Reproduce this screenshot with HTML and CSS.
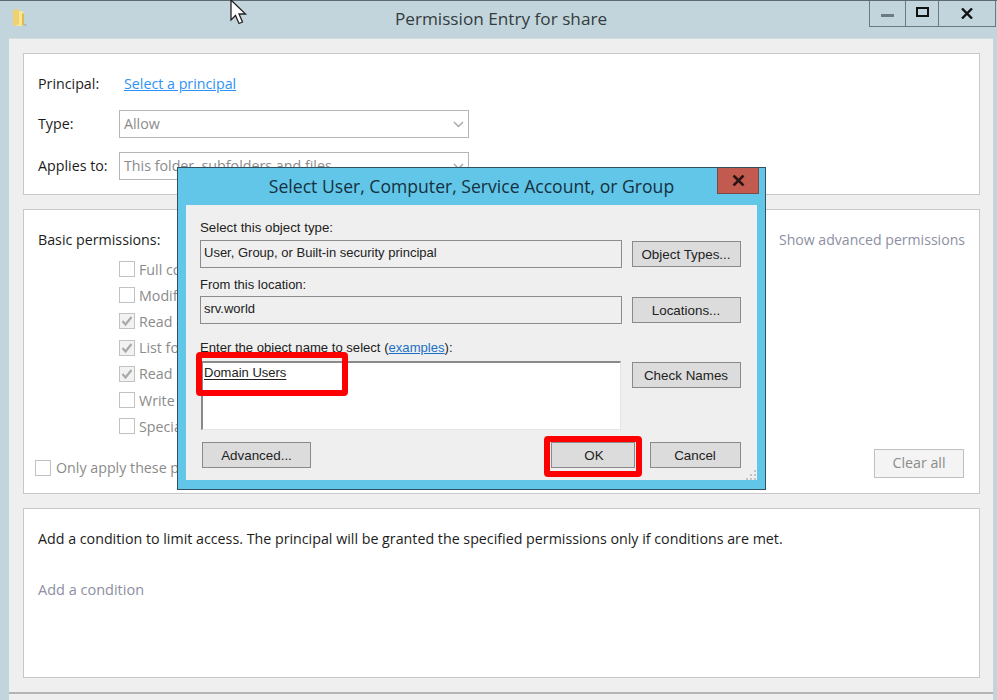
FILE: index.html
```html
<!DOCTYPE html>
<html lang="en">
<head>
<meta charset="utf-8">
<title>Permission Entry for share</title>
<link rel="stylesheet" href="styles.css">
</head>
<body>
<div class="window">
  <header class="titlebar">
    <svg class="folder" width="16" height="20" viewBox="0 0 16 20"><path d="M1 2l5-1 1 1v15l-5 1-1-1z" fill="#eed272"/><path d="M7 3h3l2 2v11l-2 2H3l4-2z" fill="#f8e596"/><path d="M10 5l2 1v11l-2 1z" fill="#dcbc4e"/><path d="M12 16l3 1-2 1z" fill="#8fa2a9"/></svg>
    <h1 class="wintitle">Permission Entry for share</h1>
    <div class="controls">
      <span class="ctl ctl-min"><i class="min-bar"></i></span>
      <span class="ctl ctl-max"><i class="max-box"></i></span>
      <span class="ctl ctl-close"><svg width="12" height="11" viewBox="0 0 12 11"><path d="M1 .5l10 10M11 .5l-10 10" stroke="#111" stroke-width="2.400" fill="none"/></svg></span>
    </div>
  </header>
  <main class="panel">
    <section class="card card-top">
      <div class="row row-principal"><span class="lbl">Principal:</span><a class="link">Select a principal</a></div>
      <div class="row row-type"><span class="lbl">Type:</span><div class="select">Allow<svg class="chev" width="11" height="7" viewBox="0 0 11 7"><path d="M1 1l4.500 4.500L10 1" stroke="#a8a8a8" stroke-width="1.500" fill="none"/></svg></div></div>
      <div class="row row-applies"><span class="lbl">Applies to:</span><div class="select">This folder, subfolders and files<svg class="chev" width="11" height="7" viewBox="0 0 11 7"><path d="M1 1l4.500 4.500L10 1" stroke="#a8a8a8" stroke-width="1.500" fill="none"/></svg></div></div>
    </section>
    <section class="card card-perm">
      <div class="perm-head"><span class="lbl">Basic permissions:</span><span class="muted-link adv">Show advanced permissions</span></div>
      <ul class="checks">
        <li><i class="cb"></i>Full control</li>
        <li><i class="cb"></i>Modify</li>
        <li><i class="cb on"><svg width="14" height="14" viewBox="0 0 14 14"><path d="M2.500 7l3 3.500 6-7.500" stroke="#a9a9a9" stroke-width="2.200" fill="none"/></svg></i>Read &amp; execute</li>
        <li><i class="cb on"><svg width="14" height="14" viewBox="0 0 14 14"><path d="M2.500 7l3 3.500 6-7.500" stroke="#a9a9a9" stroke-width="2.200" fill="none"/></svg></i>List folder contents</li>
        <li><i class="cb on"><svg width="14" height="14" viewBox="0 0 14 14"><path d="M2.500 7l3 3.500 6-7.500" stroke="#a9a9a9" stroke-width="2.200" fill="none"/></svg></i>Read</li>
        <li><i class="cb"></i>Write</li>
        <li><i class="cb"></i>Special permissions</li>
      </ul>
      <div class="perm-foot">
        <span class="only"><i class="cb"></i>Only apply these permissions to objects and/or containers within this container</span>
        <span class="clear">Clear all</span>
      </div>
    </section>
    <section class="card card-cond">
      <p class="cond-text">Add a condition to limit access. The principal will be granted the specified permissions only if conditions are met.</p>
      <span class="muted-link">Add a condition</span>
    </section>
    <footer class="footer"></footer>
  </main>
</div>

<svg class="cursor" width="18" height="27" viewBox="0 0 18 27"><path d="M1 0v20l4.500-4.500 3.500 8 3.500-1.500-3.500-8h6.500z" fill="#fff" stroke="#222" stroke-width="1.300"/></svg>

<div class="dialog">
  <div class="dlg-title">Select User, Computer, Service Account, or Group</div>
  <span class="dlg-close"><svg width="13" height="11" viewBox="0 0 13 11"><path d="M1.500 .5l10 10M11.500 .5l-10 10" stroke="#2a1512" stroke-width="2.600" fill="none"/></svg></span>
  <div class="dlg-body">
    <div class="dlg-label l1">Select this object type:</div>
    <div class="dlg-row">
      <div class="dlg-field">User, Group, or Built-in security principal</div>
      <span class="btn">Object Types...</span>
    </div>
    <div class="dlg-label l2">From this location:</div>
    <div class="dlg-row">
      <div class="dlg-field">srv.world</div>
      <span class="btn">Locations...</span>
    </div>
    <div class="dlg-label l3">Enter the object name to select (<a class="dlg-link">examples</a>):</div>
    <div class="dlg-row dlg-row-name">
      <div class="dlg-area"><u>Domain Users</u></div>
      <span class="btn">Check Names</span>
    </div>
    <div class="dlg-actions">
      <span class="btn">Advanced...</span>
      <span class="spacer"></span>
      <span class="btn btn-ok">OK</span>
      <span class="btn btn-cancel">Cancel</span>
    </div>
    <svg class="grip" width="12" height="11" viewBox="0 0 12 11"><path d="M9 1h2v2H9zM5 5h2v2H5zM9 5h2v2H9zM1 9h2v2H1zM5 9h2v2H5zM9 9h2v2H9z" fill="#c4c4c4"/></svg>
  </div>
</div>
<div class="mark mark-name"></div>
<div class="mark mark-ok"></div>
</body>
</html>
```
FILE: styles.css
```css
* { box-sizing: border-box; }
html, body { margin: 0; height: 700px; overflow: hidden; }
body { position: relative; width: 997px; font-family: "Open Sans", "Noto Sans", sans-serif; font-size: 14.250px; color: #1c1c1c; background: #c3d5dc; }

.window { display: flex; flex-direction: column; height: 700px; border-top: 1.500px solid #5d6a70; }
.titlebar { position: relative; flex: 0 0 36.500px; display: flex; align-items: flex-start; justify-content: center; }
.folder { position: absolute; left: 12px; top: 7px; }
.wintitle { margin: 7px 0 0 5px; font-size: 17.200px; font-weight: 400; line-height: 22px; color: #333c40; }
.controls { position: absolute; top: 0; right: 1px; display: flex; height: 25.500px; border: 1px solid #6b7a82; border-top: 0; }
.ctl { display: flex; align-items: center; justify-content: center; }
.ctl-min { width: 36px; border-right: 1px solid #6b7a82; }
.ctl-max { width: 33px; border-right: 1px solid #6b7a82; }
.ctl-close { width: 56px; }
.min-bar { display: block; width: 13px; height: 3px; margin-top: 4px; background: #6d7b83; }
.max-box { display: block; width: 13px; height: 10px; border: 2.500px solid #111; margin-bottom: 2px; }

.panel { flex: 1; margin: 0 4px 0 9px; padding: 14px 13px 0 14px; background: #efefef; display: flex; flex-direction: column; border-top: 1px solid #d3dde1; }
.card { background: #fff; border: 1.500px solid #c8c8c8; }
.card-top { height: 142px; padding: 0 14px; }
.card-perm { height: 285px; margin-top: 14px; padding: 0 14px; display: flex; flex-direction: column; }
.card-cond { height: 170px; margin-top: 14px; padding: 0 14px; }

.row { display: flex; align-items: center; }
.lbl { display: block; width: 81px; flex: none; white-space: nowrap; }
.row-principal { height: 20px; margin-top: 20px; }
.link { margin-left: 5px; color: #2e93f4; text-decoration: underline; }
.row-type { margin-top: 16px; }
.row-applies { margin-top: 14px; }
.select { position: relative; width: 350px; height: 28px; line-height: 26px; padding-left: 4px; border: 1.500px solid #b5b5b5; color: #8b8b8b; background: #fff; }
.chev { position: absolute; right: 4px; top: 10px; }

.perm-head { display: flex; justify-content: space-between; margin-top: 20px; line-height: 20px; }
.muted-link { color: #8d8fa2; }
.adv { font-size: 14.100px; }
.checks { list-style: none; margin: 6.500px 0 0 81px; padding: 0; color: #8b8b8b; }
.checks li { display: flex; align-items: center; height: 26.200px; white-space: nowrap; }
.cb { display: flex; align-items: center; justify-content: center; flex: none; width: 16px; height: 16px; margin-right: 4px; border: 1.500px solid #c2c2c2; background: #fff; }
.cb.on { background: #f2f2f2; }
.perm-foot { position: relative; display: flex; margin-top: 9.500px; height: 30px; align-items: center; }
.only { display: flex; align-items: center; margin: 8px 0 0 -3px; color: #8b8b8b; white-space: nowrap; }
.only .cb { margin-right: 5px; }
.clear { position: absolute; right: 1px; top: 0; width: 90px; height: 29px; line-height: 25px; text-align: center; color: #8b8b8b; background: #f4f4f4; border: 1.500px solid #c0c0c0; }

.cond-text { margin: 20px 0 0; line-height: 20px; white-space: nowrap; }
.card-cond .muted-link { display: block; margin-top: 31px; line-height: 20px; font-size: 14.500px; }

.footer { margin: 14px -13px 0 -14px; border-top: 2px solid #b4b4b4; height: 8px; }

.cursor { position: absolute; left: 230px; top: 0; }

.dialog { position: absolute; left: 177px; top: 167px; width: 589px; height: 323px; background: #62c6e8; border: 1.500px solid #33505f; display: flex; flex-direction: column; font-family: "Liberation Sans", sans-serif; font-size: 13px; }
.dlg-title { flex: 0 0 36.500px; line-height: 36px; text-align: center; font-family: "Open Sans", sans-serif; font-size: 17.600px; color: #163040; }
.dlg-close { position: absolute; right: 6px; top: 0; width: 42px; height: 26px; display: flex; align-items: center; justify-content: center; background: #c25a50; border: 1px solid #7b4a48; border-top: 0; }
.dlg-body { position: relative; flex: 1; margin: 0 8.500px 9px 8px; padding: 0 16px 0 14px; background: #efefef; color: #222; }
.dlg-label { line-height: 16px; white-space: nowrap; }
.l1 { padding-top: 15px; height: 35px; font-size: 13.300px; }
.l2 { height: 28px; padding-top: 9px; }
.l3 { height: 37px; padding-top: 16px; font-size: 13.100px; }
.dlg-row { display: flex; justify-content: space-between; align-items: flex-start; }
.dlg-field { width: 422px; height: 28px; padding-left: 3px; line-height: 23px; border: 1.500px solid #8c8c8c; white-space: nowrap; }
.btn { display: block; width: 109px; height: 26px; line-height: 25px; margin-top: 1.500px; text-align: center; font-size: 13.400px; background: #dcdcdc; border: 1.500px solid #8a8a8a; white-space: nowrap; }
.dlg-row-name { height: 78px; }
.dlg-area { width: 420px; height: 69px; margin-left: 1px; padding: 1px 1px 0; background: #fff; border-top: 2px solid #8a8a8a; border-left: 2px solid #8a8a8a; border-right: 1px solid #e4e4e4; border-bottom: 1px solid #e4e4e4; line-height: 18px; }
.dlg-area u { text-underline-offset: 2px; }
.dlg-link { color: #1b6fc4; text-decoration: underline; }
.dlg-actions { display: flex; margin-left: 2px; margin-top: 2px; }
.dlg-actions .btn { line-height: 26px; }
.spacer { flex: 1; }
.btn-ok { width: 84px; padding-left: 3px; }
.btn-cancel { width: 91px; margin-left: 15px; }
.grip { position: absolute; right: 0; bottom: 0; }

.mark { position: absolute; border: 6px solid #fe0000; border-radius: 4px; }
.mark-name { left: 196px; top: 352px; width: 152px; height: 44px; }
.mark-ok { left: 544px; top: 436px; width: 98px; height: 41px; }
```
